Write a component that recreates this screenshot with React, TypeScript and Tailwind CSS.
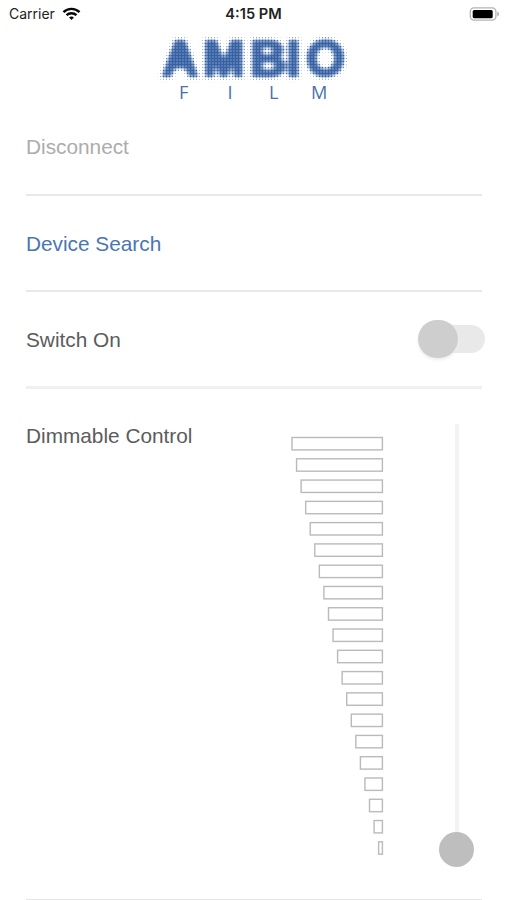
import React from "react";

const bars = Array.from({ length: 20 }, (_, i) => i);

function StatusBar() {
  return (
    <header className="grid h-7 grid-cols-3 items-center pl-[9px] pr-[7px] font-['Inter',sans-serif] text-[14.6px] leading-7 text-[#222]">
      <div className="flex items-center gap-[7px]">
        <span className="text-[14px]">Carrier</span>
        <svg width="19" height="14" viewBox="0 0 18 14" fill="none" stroke="#080808" strokeWidth="2.4" className="-mt-px">
          <path d="M1 5.2C5.4.7 12.6.7 17 5.2" />
          <path d="M4 8.2c2.8-2.7 7.2-2.7 10 0" />
          <path d="M6.6 10.5c1.3-1.2 3.5-1.2 4.8 0L9 13Z" fill="#080808" stroke="none" />
        </svg>
      </div>
      <span className="-ml-[2px] text-center font-semibold">4:15 PM</span>
      <svg className="-mt-px justify-self-end" width="31" height="16" viewBox="0 0 31 16">
        <rect x="1.3" y="1.8" width="25.6" height="12.4" rx="3.6" fill="white" stroke="#b4b4b4" strokeWidth="1.3" />
        <rect x="3.7" y="3.9" width="20" height="8.4" rx="1.6" fill="#000" />
        <path d="M28.3 5.8c2.2.7 2.2 3.8 0 4.5Z" fill="#aaa" />
      </svg>
    </header>
  );
}

function Logo() {
  return (
    <svg className="mx-auto block" width="200" height="76" viewBox="154 28 200 76">
      <defs>
        <radialGradient id="dot">
          <stop offset="0" stopColor="#000" />
          <stop offset="1" stopColor="#fff" />
        </radialGradient>
        <pattern id="screen" width="3" height="3" patternUnits="userSpaceOnUse">
          <rect width="3" height="3" fill="white" />
          <circle cx="1.5" cy="1.5" r="2" fill="url(#dot)" />
        </pattern>
        <filter id="soften" x="154" y="28" width="200" height="60" filterUnits="userSpaceOnUse" colorInterpolationFilters="sRGB">
          <feGaussianBlur stdDeviation="2.6" />
        </filter>
        <filter id="halftone" x="154" y="28" width="200" height="56" filterUnits="userSpaceOnUse" colorInterpolationFilters="sRGB">
          <feComponentTransfer>
            <feFuncR type="linear" slope="2.7" intercept="-0.6" />
            <feFuncG type="linear" slope="2.7" intercept="-0.6" />
            <feFuncB type="linear" slope="2.7" intercept="-0.6" />
          </feComponentTransfer>
          <feColorMatrix values="0.79 0 0 0 0.21  0 0.62 0 0 0.38  0 0 0.36 0 0.64  0 0 0 1 0" />
        </filter>
      </defs>
      <g filter="url(#halftone)">
        <rect x="154" y="28" width="200" height="56" fill="white" />
        <g filter="url(#soften)">
          <text x="162 203 250 286.5 306" y="76.3" fill="black" stroke="black" strokeWidth="5" fontFamily="Liberation Sans, Arial, sans-serif" fontWeight="700" fontSize="50">AMBIO</text>
          <path d="M174 40h12l7 29h-26z" />
        </g>
        <rect x="154" y="28" width="200" height="56" fill="url(#screen)" opacity="0.4" />
      </g>
      <g fill="#4b70ad" fontFamily="Open Sans, sans-serif" fontSize="18.2" fontWeight="400">
        <text x="179 227.5 269 311" y="98.5">FILM</text>
      </g>
    </svg>
  );
}

function Dimmer() {
  return (
    <svg className="block" width="100" height="430" viewBox="287 434 100 430" fill="white" stroke="#bababa" strokeWidth="1.4">
      {bars.map((i) => (
        <rect key={i} x={292 + i * 4.56} y={437.5 + i * 21.28} width={90.4 - i * 4.56} height="12.4" />
      ))}
    </svg>
  );
}

export default function App() {
  return (
    <main className="h-[900px] w-[507px] overflow-hidden bg-white font-['Liberation_Sans',Arial,sans-serif] text-[20.8px] text-[#5c5c5c]">
      <StatusBar />
      <Logo />
      <div className="ml-[26px] w-[456px] leading-6">
        <section className="h-[92px] border-b-2 border-[#e8e8e8] pt-[31px] text-[#acacac]">Disconnect</section>
        <section className="h-24 border-b-2 border-[#e8e8e8] pt-9 text-[#4a76b3]">Device Search</section>
        <section className="flex h-[97px] justify-between border-b-[3px] border-[#f0f0f0] pt-9">
          <span>Switch On</span>
          <div className="-mr-[3px] -mt-[9px] flex h-10 w-[67px] items-center">
            <div className="z-10 h-[38px] w-10 shrink-0 rounded-full bg-[#cecece] shadow-[0_2px_3px_#eeeeee]" />
            <div className="-ml-5 h-7 w-[47px] shrink-0 rounded-r-full bg-[#e9e9e9]" />
          </div>
        </section>
        <section className="flex h-[511px] border-b border-[#e6e6e6] pt-[35px]">
          <span className="w-[261px]">Dimmable Control</span>
          <div className="mt-[10px]">
            <Dimmer />
          </div>
          <div className="ml-[52px] flex w-[35px] flex-col items-center">
            <div className="h-[408px] w-[4px] bg-[#f3f3f3]" />
            <div className="size-[35px] shrink-0 rounded-full bg-[#bebebe]" />
          </div>
        </section>
      </div>
    </main>
  );
}
